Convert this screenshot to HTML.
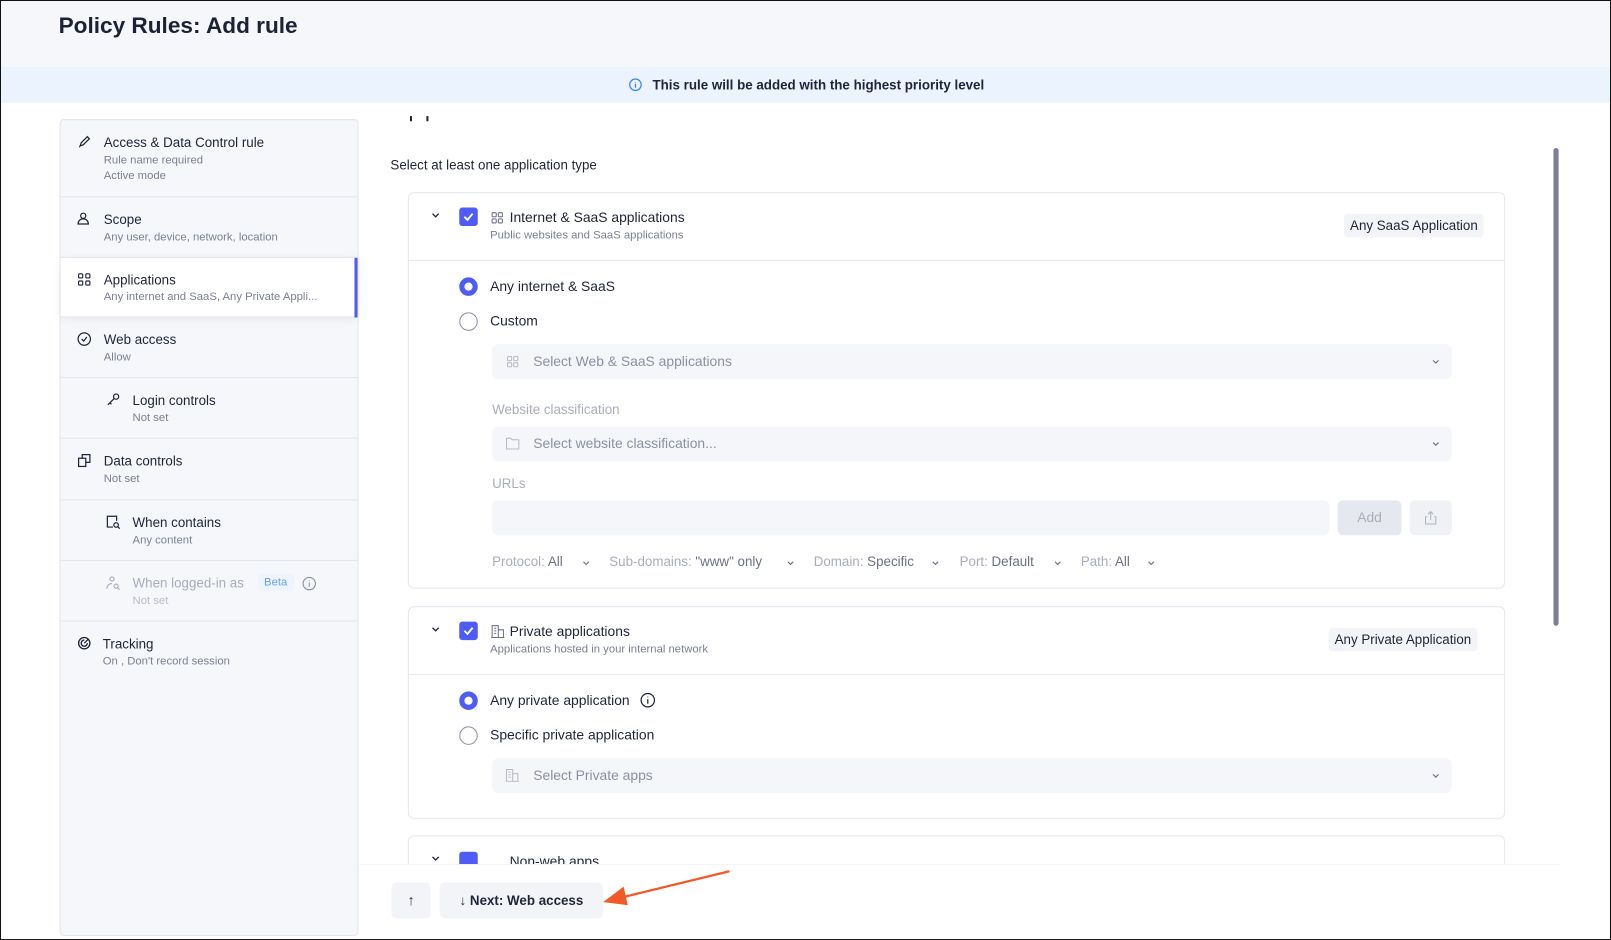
<!DOCTYPE html>
<html><head><meta charset="utf-8"><style>
*{box-sizing:border-box;margin:0;padding:0}
html,body{width:1611px;height:940px;overflow:hidden;background:#fff;font-family:"Liberation Sans",sans-serif;color:#1f2438}
#w{position:absolute;left:0;top:0;width:1568px;height:915px;transform:scale(1.02742);transform-origin:0 0;border:1px solid #111;overflow:hidden;background:#fff}
.a{position:absolute}
.hdr{left:0;top:0;width:1568px;height:64px;background:#f5f7fb}
.ttl{left:56px;top:11px;font-size:22px;font-weight:bold;color:#1c2236}
.ban{left:0;top:64px;width:1568px;height:35px;background:#eaf3fe;font-size:13px;font-weight:bold;text-align:center;line-height:35px;color:#1f2438}
.lp{left:57px;top:115px;width:291px;height:795px;background:#f5f7fb;border:1px solid #e2e5ec;border-radius:4px}
.it{position:absolute;left:0;width:289px;border-bottom:1px solid #e2e5ec}
.it .t{position:absolute;font-size:13px;color:#1f2438}
.it .s{position:absolute;font-size:11px;color:#7b8093;line-height:15px}
.it svg{position:absolute}
.card{border:1px solid #e4e7ee;border-radius:6px;background:#fff}
.cb{width:18px;height:18px;background:#4f5bf5;border-radius:3px}
.r1{width:18px;height:18px;border-radius:50%;border:5px solid #4f5bf5;background:#fff}
.r0{width:18px;height:18px;border-radius:50%;border:1.3px solid #8a8fa2;background:#fff}
.lbl{font-size:13.5px;color:#1f2438}
.sel{background:#f5f6fa;border-radius:6px;height:34px;font-size:13.5px;color:#8b90a1;line-height:34px}
.gl{font-size:13px;color:#a9adbb}
.tag{background:#f3f4f7;border-radius:4px;font-size:13px;color:#1f2438;height:23px;line-height:23px;padding:0 6px}
.flt{position:absolute;top:538px;font-size:13px;color:#a9adbb}
.flt b{font-weight:normal;color:#6b7085}
.chv{position:absolute;top:544px}
</style></head><body><div id="w">
<div class="a hdr"></div>
<div class="a ttl">Policy Rules: Add rule</div>
<div class="a ban"><svg width="13" height="13" viewBox="0 0 14 14" style="vertical-align:-2px;margin-right:10px"><circle cx="7" cy="7" r="6" fill="none" stroke="#3b82f6" stroke-width="1.3"/><path d="M7 6v4M7 4v.5" stroke="#3b82f6" stroke-width="1.4"/></svg>This rule will be added with the highest priority level</div>

<div class="a lp">
 <div class="it" style="top:0;height:75px">
  <svg style="left:16px;top:14px" width="14" height="14" viewBox="0 0 14 14"><path d="M3 11l1-3 6-6 2 2-6 6z M2 12h1" fill="none" stroke="#1f2438" stroke-width="1.2"/></svg>
  <div class="t" style="left:42px;top:14px">Access &amp; Data Control rule</div>
  <div class="s" style="left:42px;top:32px">Rule name required<br>Active mode</div></div>
 <div class="it" style="top:75px;height:59px">
  <svg style="left:16px;top:14px" width="14" height="14" viewBox="0 0 14 14"><circle cx="6" cy="4" r="2.5" fill="none" stroke="#1f2438" stroke-width="1.2"/><path d="M1 12c0-3 2-5 5-5s5 2 5 5z" fill="none" stroke="#1f2438" stroke-width="1.2"/></svg>
  <div class="t" style="left:42px;top:14px">Scope</div>
  <div class="s" style="left:42px;top:32px">Any user, device, network, location</div></div>
 <div class="it" style="top:134px;height:58px;background:#fff;box-shadow:0 2px 10px rgba(0,0,0,.06)">
  <svg style="left:16px;top:14px" width="14" height="14" viewBox="0 0 14 14" fill="none" stroke="#1f2438" stroke-width="1.1"><rect x="1.5" y="1.5" width="4" height="4" rx="1"/><rect x="8.5" y="1.5" width="4" height="4" rx="1"/><rect x="1.5" y="8.5" width="4" height="4" rx="1"/><rect x="8.5" y="8.5" width="4" height="4" rx="1"/></svg>
  <div class="t" style="left:42px;top:14px">Applications</div>
  <div class="s" style="left:42px;top:31px">Any internet and SaaS, Any Private Appli...</div>
  <div style="position:absolute;right:0;top:0;width:3px;height:58px;background:#4f5bf5"></div></div>
 <div class="it" style="top:192px;height:59px">
  <svg style="left:16px;top:14px" width="14" height="14" viewBox="0 0 14 14" fill="none" stroke="#1f2438" stroke-width="1.2"><circle cx="7" cy="7" r="6"/><path d="M4.5 7l2 2 3-4"/></svg>
  <div class="t" style="left:42px;top:14px">Web access</div>
  <div class="s" style="left:42px;top:32px">Allow</div></div>
 <div class="it" style="top:251px;height:59px">
  <svg style="left:44px;top:14px" width="14" height="14" viewBox="0 0 14 14" fill="none" stroke="#1f2438" stroke-width="1.2"><circle cx="10" cy="4" r="2.5"/><path d="M8 6l-6 6M4 10l1.5 1.5"/></svg>
  <div class="t" style="left:70px;top:14px">Login controls</div>
  <div class="s" style="left:70px;top:32px">Not set</div></div>
 <div class="it" style="top:310px;height:60px">
  <svg style="left:16px;top:14px" width="14" height="14" viewBox="0 0 14 14" fill="none" stroke="#1f2438" stroke-width="1.2"><rect x="1.5" y="5" width="7" height="8"/><path d="M5 5V1.5h7.5V9H8.5"/></svg>
  <div class="t" style="left:42px;top:14px">Data controls</div>
  <div class="s" style="left:42px;top:32px">Not set</div></div>
 <div class="it" style="top:370px;height:59px">
  <svg style="left:44px;top:14px" width="15" height="15" viewBox="0 0 15 15" fill="none" stroke="#1f2438" stroke-width="1.2"><path d="M7 12H1.5V1.5h9V6"/><circle cx="10" cy="10" r="2.2"/><path d="M11.6 11.6l2 2"/></svg>
  <div class="t" style="left:70px;top:14px">When contains</div>
  <div class="s" style="left:70px;top:32px">Any content</div></div>
 <div class="it" style="top:429px;height:59px">
  <svg style="left:44px;top:14px" width="15" height="15" viewBox="0 0 15 15" fill="none" stroke="#a9adbb" stroke-width="1.1"><circle cx="6" cy="3.5" r="2"/><path d="M1 13c0-3 2-5 5-5"/><circle cx="10" cy="10.5" r="2"/><path d="M11.5 12l2 2"/></svg>
  <div class="t" style="left:70px;top:14px;color:#a9adbb">When logged-in as</div>
  <div style="position:absolute;left:192px;top:13px;background:#eef4fd;color:#6aa2ea;font-size:11px;padding:2px 6px;border-radius:3px">Beta</div>
  <svg style="left:235px;top:15px" width="14" height="14" viewBox="0 0 14 14" fill="none" stroke="#8b90a1" stroke-width="1.1"><circle cx="7" cy="7" r="6"/><path d="M7 6v4M7 4v.6"/></svg>
  <div class="s" style="left:70px;top:32px;color:#b8bcc8">Not set</div></div>
 <div class="it" style="top:488px;height:60px;border-bottom:none">
  <svg style="left:16px;top:14px" width="14" height="14" viewBox="0 0 14 14" fill="none" stroke="#1f2438" stroke-width="1.3"><circle cx="7" cy="7" r="5.5"/><path d="M7 7l4-4M7 4a3 3 0 1 0 3 3"/></svg>
  <div class="t" style="left:41px;top:14px">Tracking</div>
  <div class="s" style="left:41px;top:32px">On , Don't record session</div></div>
</div>

<div class="a" style="left:398px;top:112px;width:2px;height:5px;background:#1f2438"></div>
<div class="a" style="left:414px;top:112px;width:2px;height:5px;background:#1f2438"></div>
<div class="a lbl" style="left:379px;top:152px;font-size:13px">Select at least one application type</div>

<!-- card 1 -->
<div class="a card" style="left:396px;top:186px;width:1068px;height:386px"></div>
<div class="a" style="left:397px;top:252px;width:1066px;height:1px;background:#e8eaf0"></div>
<svg class="a" style="left:418px;top:205px" width="10" height="8" viewBox="0 0 10 8"><path d="M2 2l3 3 3-3" fill="none" stroke="#1f2438" stroke-width="1.3"/></svg>
<div class="a cb" style="left:446px;top:201px"><svg width="18" height="18" viewBox="0 0 18 18"><path d="M5 9l3 3 5-6" fill="none" stroke="#fff" stroke-width="1.8"/></svg></div>
<svg class="a" style="left:477px;top:205px" width="12" height="12" viewBox="0 0 12 12" fill="none" stroke="#6b7085" stroke-width="1"><rect x="1" y="1" width="4" height="4" rx=".8"/><rect x="7" y="1" width="4" height="4" rx=".8"/><rect x="1" y="7" width="4" height="4" rx=".8"/><rect x="7" y="7" width="4" height="4" rx=".8"/></svg>
<div class="a lbl" style="left:495px;top:203px">Internet &amp; SaaS applications</div>
<div class="a" style="left:476px;top:222px;font-size:11px;color:#7b8093">Public websites and SaaS applications</div>
<div class="a tag" style="left:1307px;top:207px">Any SaaS Application</div>
<div class="a r1" style="left:446px;top:269px"></div>
<div class="a lbl" style="left:476px;top:270px">Any internet &amp; SaaS</div>
<div class="a r0" style="left:446px;top:303px"></div>
<div class="a lbl" style="left:476px;top:304px">Custom</div>
<div class="a sel" style="left:478px;top:334px;width:934px;padding-left:40px">Select Web &amp; SaaS applications</div>
<svg class="a" style="left:492px;top:345px" width="12" height="12" viewBox="0 0 12 12" fill="none" stroke="#b6bac6" stroke-width="1"><rect x="1" y="1" width="4" height="4" rx=".8"/><rect x="7" y="1" width="4" height="4" rx=".8"/><rect x="1" y="7" width="4" height="4" rx=".8"/><rect x="7" y="7" width="4" height="4" rx=".8"/></svg>
<svg class="a" style="left:1392px;top:348px" width="9" height="7" viewBox="0 0 10 8"><path d="M2 2l3 3 3-3" fill="none" stroke="#6b7085" stroke-width="1.3"/></svg>
<div class="a gl" style="left:478px;top:390px">Website classification</div>
<div class="a sel" style="left:478px;top:414px;width:934px;padding-left:40px">Select website classification...</div>
<svg class="a" style="left:491px;top:424px" width="14" height="13" viewBox="0 0 14 13" fill="none" stroke="#b6bac6" stroke-width="1"><path d="M1 1.5h4l1.5 1.5H13V12H1z"/></svg>
<svg class="a" style="left:1392px;top:428px" width="9" height="7" viewBox="0 0 10 8"><path d="M2 2l3 3 3-3" fill="none" stroke="#6b7085" stroke-width="1.3"/></svg>
<div class="a gl" style="left:478px;top:462px">URLs</div>
<div class="a sel" style="left:478px;top:486px;width:815px"></div>
<div class="a" style="left:1301px;top:486px;width:62px;height:34px;background:#e6e8ef;border-radius:5px;color:#a9adbb;font-size:13.5px;text-align:center;line-height:34px">Add</div>
<div class="a" style="left:1371px;top:486px;width:41px;height:34px;background:#f0f1f5;border-radius:5px"><svg style="position:absolute;left:14px;top:10px" width="13" height="14" viewBox="0 0 13 14" fill="none" stroke="#b0b4c1" stroke-width="1"><path d="M6.5 1v8M4 3.5l2.5-2.5L9 3.5M3 6H1.5v7h10V6H10"/></svg></div>
<div class="flt" style="left:478px">Protocol: <b>All</b></div>
<div class="flt" style="left:592px">Sub-domains: <b>"www" only</b></div>
<div class="flt" style="left:791px">Domain: <b>Specific</b></div>
<div class="flt" style="left:933px">Port: <b>Default</b></div>
<div class="flt" style="left:1051px">Path: <b>All</b></div>
<svg class="chv" style="left:565px" width="9" height="7" viewBox="0 0 10 8"><path d="M2 2l3 3 3-3" fill="none" stroke="#6b7085" stroke-width="1.3"/></svg>
<svg class="chv" style="left:764px" width="9" height="7" viewBox="0 0 10 8"><path d="M2 2l3 3 3-3" fill="none" stroke="#6b7085" stroke-width="1.3"/></svg>
<svg class="chv" style="left:905px" width="9" height="7" viewBox="0 0 10 8"><path d="M2 2l3 3 3-3" fill="none" stroke="#6b7085" stroke-width="1.3"/></svg>
<svg class="chv" style="left:1024px" width="9" height="7" viewBox="0 0 10 8"><path d="M2 2l3 3 3-3" fill="none" stroke="#6b7085" stroke-width="1.3"/></svg>
<svg class="chv" style="left:1115px" width="9" height="7" viewBox="0 0 10 8"><path d="M2 2l3 3 3-3" fill="none" stroke="#6b7085" stroke-width="1.3"/></svg>

<!-- card 2 -->
<div class="a card" style="left:396px;top:589px;width:1068px;height:207px"></div>
<div class="a" style="left:397px;top:655px;width:1066px;height:1px;background:#e8eaf0"></div>
<svg class="a" style="left:418px;top:608px" width="10" height="8" viewBox="0 0 10 8"><path d="M2 2l3 3 3-3" fill="none" stroke="#1f2438" stroke-width="1.3"/></svg>
<div class="a cb" style="left:446px;top:604px"><svg width="18" height="18" viewBox="0 0 18 18"><path d="M5 9l3 3 5-6" fill="none" stroke="#fff" stroke-width="1.8"/></svg></div>
<svg class="a" style="left:477px;top:607px" width="13" height="13" viewBox="0 0 13 13" fill="none" stroke="#6b7085" stroke-width="1"><path d="M1 12.5V1h6v11.5M7 5h5v7.5M0 12.5h13M3 3.5h2M3 6h2M3 8.5h2"/></svg>
<div class="a lbl" style="left:495px;top:606px">Private applications</div>
<div class="a" style="left:476px;top:625px;font-size:11px;color:#7b8093">Applications hosted in your internal network</div>
<div class="a tag" style="left:1292px;top:610px">Any Private Application</div>
<div class="a r1" style="left:446px;top:672px"></div>
<div class="a lbl" style="left:476px;top:673px">Any private application</div>
<svg class="a" style="left:622px;top:673px" width="15" height="15" viewBox="0 0 15 15" fill="none" stroke="#1f2438" stroke-width="1.2"><circle cx="7.5" cy="7.5" r="6.5"/><path d="M7.5 6.5v4.5M7.5 4v.8"/></svg>
<div class="a r0" style="left:446px;top:706px"></div>
<div class="a lbl" style="left:476px;top:707px">Specific private application</div>
<div class="a sel" style="left:478px;top:737px;width:934px;padding-left:40px">Select Private apps</div>
<svg class="a" style="left:491px;top:747px" width="13" height="13" viewBox="0 0 13 13" fill="none" stroke="#b6bac6" stroke-width="1"><path d="M1 12.5V1h6v11.5M7 5h5v7.5M0 12.5h13M3 3.5h2M3 6h2M3 8.5h2"/></svg>
<svg class="a" style="left:1392px;top:751px" width="9" height="7" viewBox="0 0 10 8"><path d="M2 2l3 3 3-3" fill="none" stroke="#6b7085" stroke-width="1.3"/></svg>

<!-- card 3 partial -->
<div class="a card" style="left:396px;top:812px;width:1068px;height:60px"></div>
<svg class="a" style="left:418px;top:831px" width="10" height="8" viewBox="0 0 10 8"><path d="M2 2l3 3 3-3" fill="none" stroke="#1f2438" stroke-width="1.3"/></svg>
<div class="a cb" style="left:446px;top:828px"></div>
<div class="a lbl" style="left:495px;top:830px">Non-web apps</div>

<!-- footer -->
<div class="a" style="left:349px;top:840px;width:1168px;height:75px;background:#fff;border-top:1px solid #f2f3f6"></div>
<div class="a" style="left:380px;top:858px;width:38px;height:35px;background:#f3f4f7;border-radius:5px;text-align:center;line-height:35px;font-size:14px;font-weight:bold">↑</div>
<div class="a" style="left:427px;top:858px;width:159px;height:35px;background:#f3f4f7;border-radius:5px;text-align:center;line-height:35px;font-size:13px;font-weight:bold">↓ Next: Web access</div>
<svg class="a" style="left:580px;top:840px" width="140" height="50" viewBox="0 0 140 50"><path d="M129 7L22 33" stroke="#f05a28" stroke-width="2.2"/><path d="M6 37l20-15 4 18z" fill="#f05a28"/></svg>

<div class="a" style="left:1511px;top:143px;width:5px;height:465px;background:#7a7f95;border-radius:3px"></div>
</div></body></html>
